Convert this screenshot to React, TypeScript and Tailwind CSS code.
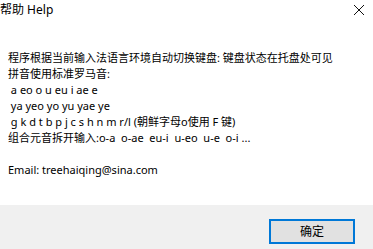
import React from 'react';

const font = { fontFamily: '"Segoe UI", "Noto Sans", "Noto Sans CJK SC", sans-serif' };

const lines = [
  '程序根据当前输入法语言环境自动切换键盘: 键盘状态在托盘处可见',
  '拼音使用标准罗马音:',
  '\u00a0a eo o u eu i ae e',
  '\u00a0ya yeo yo yu yae ye',
  '\u00a0g k d t b p j c s h n m r/l (朝鲜字母o使用 F 键)',
  '组合元音拆开输入:o-a  o-ae  eu-i  u-eo  u-e  o-i ...',
  '\u00a0',
  'Email: treehaiqing@sina.com',
];

export default function App() {
  return (
    <div className="w-[373px] h-[249px] bg-white flex flex-col text-[12px] text-black overflow-hidden" style={font}>
      {/* title bar */}
      <div className="h-[20px] flex items-center justify-between">
        <span className="leading-none">帮助 Help</span>
        <svg width="12" height="12" viewBox="0 0 12 12" className="mr-[8px]">
          <path d="M1 1 L11 11 M11 1 L1 11" stroke="#111" strokeWidth="1" />
        </svg>
      </div>

      <div className="flex-1 flex flex-col pl-[8px] pt-[30px] whitespace-pre text-[11px]">
        {lines.map((l, i) => (
          <div key={i} className="h-[16px] leading-[16px]">{l}</div>
        ))}
      </div>

      <div className="h-[44px] bg-[#f0f0f0] flex items-start justify-end pr-[18px] pt-[14px]">
        <button className="w-[86px] h-[25px] bg-[#e1e1e1] border-2 border-[#0078d7] text-[12px] leading-none">
          确定
        </button>
      </div>
    </div>
  );
}
